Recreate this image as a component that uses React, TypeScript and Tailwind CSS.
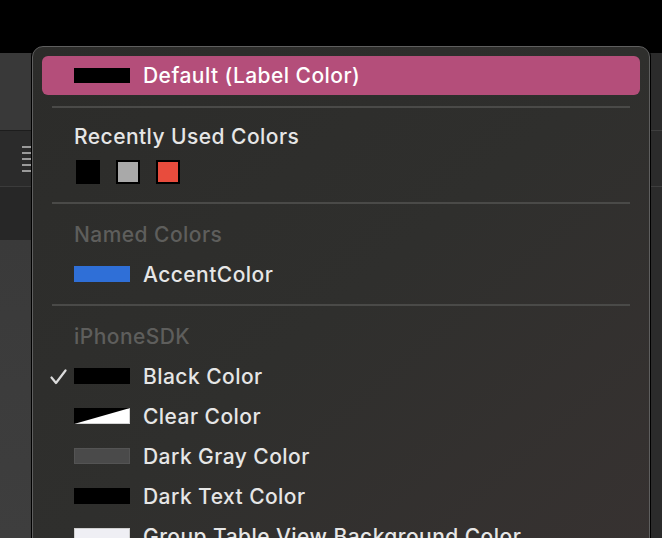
import { ReactNode } from "react";

function Separator({ top, bottom }: { top: string; bottom: string }) {
  return <div className={`mx-[19px] h-[2px] bg-[#4a4a48] ${top} ${bottom}`} />;
}

function Swatch({ children, className }: { children?: ReactNode; className: string }) {
  return <div className={`w-[56px] h-[16px] shrink-0 ${className}`}>{children}</div>;
}

function ColorRow({ swatch, label, checked = false }: { swatch: ReactNode; label: string; checked?: boolean }) {
  return (
    <div className="relative flex items-center h-[40px] pl-[41px] gap-[13px]">
      {checked && (
        <svg className="absolute left-[17px] top-[13px]" width="17" height="16" viewBox="0 0 17 16">
          <path d="M1.5 8.5 L6 14 L15.5 1.5" fill="none" stroke="#dcdcdc" strokeWidth="2.2" strokeLinecap="round" strokeLinejoin="round" />
        </svg>
      )}
      {swatch}
      <span className="pt-px text-[21px] font-medium tracking-[0.45px] text-[#e6e6e6] whitespace-nowrap">{label}</span>
    </div>
  );
}

function Header({ label, muted = false }: { label: string; muted?: boolean }) {
  return (
    <div className={`h-[40px] flex items-center pt-px pl-[41px] text-[21px] font-medium tracking-[0.45px] ${muted ? "text-[#5e5e5c]" : "text-[#e6e6e6]"}`}>
      {label}
    </div>
  );
}

export default function App() {
  return (
    <div className="relative w-[662px] h-[538px] overflow-hidden bg-black flex flex-col" style={{ fontFamily: "Inter, 'Noto Sans', sans-serif" }}>
      {/* window chrome behind the popup */}
      <div className="h-[53px] bg-black shrink-0" />
      <div className="flex flex-1">
        <div className="w-[31px] flex flex-col">
          <div className="h-[77px] bg-[#393939]" />
          <div className="h-px bg-[#1d1d1d]" />
          <div className="h-[55px] bg-[#2b2b2b] flex flex-col items-end pt-[15px] gap-[4px]">
            <div className="w-[9px] h-[2px] bg-[#9a9a9a]" />
            <div className="w-[9px] h-[2px] bg-[#9a9a9a]" />
            <div className="w-[9px] h-[2px] bg-[#9a9a9a]" />
            <div className="w-[9px] h-[2px] bg-[#9a9a9a]" />
            <div className="w-[9px] h-[2px] bg-[#9a9a9a]" />
          </div>
          <div className="h-px bg-[#3b3b3b]" />
          <div className="h-[53px] bg-[#272727]" />
          <div className="flex-1 bg-gradient-to-b from-[#3a3a3a] to-[#3e3e3e]" />
        </div>
        <div className="flex-1 flex flex-col bg-[#2b2b2b]">
          <div className="h-[77px]" />
          <div className="h-px bg-[#3e3e3e]" />
          <div className="h-[55px]" />
          <div className="h-px bg-[#3e3e3e]" />
          <div className="flex-1" />
        </div>
      </div>

      {/* color popup menu */}
      <div className="absolute left-[31px] top-[45px] w-[620px] h-[520px] bg-black p-px rounded-[12px]">
        <div className="h-full rounded-[11px] border border-[#5f5f5f] bg-gradient-to-br from-[#2c2c2a] via-[#2f2f2d] to-[#373231] pt-[9px]">
          <div className="mx-[9px] h-[39px] rounded-[6px] bg-[#b44e7a] flex items-center pl-[32px] gap-[13px]">
            <div className="w-[56px] h-[15px] bg-black" />
            <span className="pt-px text-[21px] font-medium tracking-[0.45px] text-white whitespace-nowrap">Default (Label Color)</span>
          </div>

          <Separator top="mt-[11px]" bottom="mb-[8px]" />

          <Header label="Recently Used Colors" />
          <div className="flex gap-[16px] pl-[43px] pt-[4px]">
            <div className="w-[24px] h-[24px] bg-black" />
            <div className="w-[24px] h-[24px] bg-[#a9a9a9] border-2 border-black" />
            <div className="w-[24px] h-[24px] bg-[#e84c3d] border-2 border-black" />
          </div>

          <Separator top="mt-[18px]" bottom="mb-[10px]" />

          <Header label="Named Colors" muted />
          <ColorRow label="AccentColor" swatch={<Swatch className="bg-[#2f6fd7]" />} />

          <Separator top="mt-[10px]" bottom="mb-[10px]" />

          <Header label="iPhoneSDK" muted />
          <ColorRow checked label="Black Color" swatch={<Swatch className="bg-black" />} />
          <ColorRow
            label="Clear Color"
            swatch={
              <Swatch className="">
                <svg width="56" height="16" viewBox="0 0 56 16">
                  <rect x="0.5" y="0.5" width="55" height="15" fill="#ffffff" stroke="#d4d4d4" />
                  <polygon points="0,0 56,0 0,16" fill="#000000" />
                </svg>
              </Swatch>
            }
          />
          <ColorRow label="Dark Gray Color" swatch={<Swatch className="bg-[#4a4a4a] border border-[#545454]" />} />
          <ColorRow label="Dark Text Color" swatch={<Swatch className="bg-black" />} />
          <ColorRow label="Group Table View Background Color" swatch={<Swatch className="bg-[#efeff4] border border-[#d0d0d0]" />} />
        </div>
      </div>
    </div>
  );
}
